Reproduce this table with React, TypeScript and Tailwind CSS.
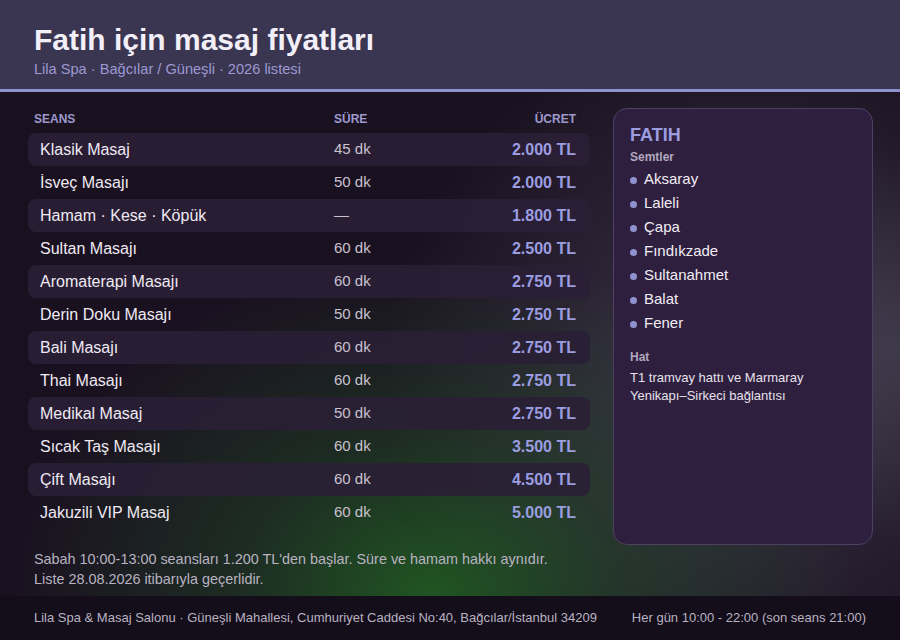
import React from "react";

const rows = [
  { name: "Klasik Masaj", dur: "45 dk", price: "2.000 TL" },
  { name: "İsveç Masajı", dur: "50 dk", price: "2.000 TL" },
  { name: "Hamam · Kese · Köpük", dur: "—", price: "1.800 TL" },
  { name: "Sultan Masajı", dur: "60 dk", price: "2.500 TL" },
  { name: "Aromaterapi Masajı", dur: "60 dk", price: "2.750 TL" },
  { name: "Derin Doku Masajı", dur: "50 dk", price: "2.750 TL" },
  { name: "Bali Masajı", dur: "60 dk", price: "2.750 TL" },
  { name: "Thai Masajı", dur: "60 dk", price: "2.750 TL" },
  { name: "Medikal Masaj", dur: "50 dk", price: "2.750 TL" },
  { name: "Sıcak Taş Masajı", dur: "60 dk", price: "3.500 TL" },
  { name: "Çift Masajı", dur: "60 dk", price: "4.500 TL" },
  { name: "Jakuzili VIP Masaj", dur: "60 dk", price: "5.000 TL" },
];

const districts = ["Aksaray", "Laleli", "Çapa", "Fındıkzade", "Sultanahmet", "Balat", "Fener"];

export default function App() {
  return (
    <div className="w-[900px] h-[640px] flex flex-col overflow-hidden font-['Liberation_Sans',Arial,sans-serif] bg-[#1a1120]">
      {/* Header */}
      <div className="h-[92px] shrink-0 bg-[#3a3551] border-b-[3px] border-[#8e93cf] px-[34px] pt-[22px]">
        <h1 className="text-[30px] leading-[36px] font-bold text-[#f3eff9]">Fatih için masaj fiyatları</h1>
        <div className="text-[14.6px] leading-[18px] text-[#9d99d1] mt-[2px]">Lila Spa · Bağcılar / Güneşli · 2026 listesi</div>
      </div>

      {/* Body */}
      <div className="flex-1 flex flex-col bg-[radial-gradient(ellipse_420px_340px_at_48%_100%,rgba(36,122,36,0.65),rgba(36,110,40,0.3)_45%,transparent),radial-gradient(ellipse_360px_360px_at_83%_55%,rgba(92,88,108,0.6),rgba(80,76,96,0.3)_50%,transparent),radial-gradient(ellipse_160px_200px_at_100%_50%,rgba(90,88,104,0.4),transparent)]">
        <div className="flex pl-[28px] pt-[16px]">
          {/* Table */}
          <div className="w-[562px]">
            <div className="grid grid-cols-[300px_1fr_auto] items-center h-[22px] pl-[6px] pr-[14px] text-[12px] font-bold text-[#9d99cd] mb-[3px]">
              <span>SEANS</span>
              <span>SÜRE</span>
              <span>ÜCRET</span>
            </div>
            {rows.map((r, i) => (
              <div
                key={r.name}
                className={`grid grid-cols-[294px_1fr_auto] items-center h-[33px] pl-[12px] pr-[14px] rounded-[8px] ${i % 2 === 0 ? "bg-[#2a1f35]/90" : ""}`}
              >
                <span className="text-[16px] text-[#efeaf3]">{r.name}</span>
                <span className="text-[15px] text-[#c9c2cf]">{r.dur}</span>
                <span className="text-[16px] font-bold text-[#9b9de0]">{r.price}</span>
              </div>
            ))}
          </div>

          {/* Side card */}
          <div className="ml-[23px] w-[260px] h-[437px] rounded-[14px] border border-[#4d4060] bg-[#2f1f3e] px-[16px] pt-[16px]">
            <div className="text-[18px] leading-[20px] font-bold text-[#9b9de0]">FATIH</div>
            <div className="text-[12px] leading-[14px] font-bold text-[#b0a8bd] mt-[5px]">Semtler</div>
            <ul className="mt-[3px]">
              {districts.map((d) => (
                <li key={d} className="flex items-center h-[24px] text-[15px] text-[#f1edf5]">
                  <span className="w-[7px] h-[7px] rounded-full bg-[#8e93cf] mr-[7px] mt-[2px]" />
                  {d}
                </li>
              ))}
            </ul>
            <div className="text-[12px] leading-[14px] font-bold text-[#b0a8bd] mt-[15px]">Hat</div>
            <div className="text-[13px] leading-[18px] text-[#e6e1ec] mt-[5px]">
              T1 tramvay hattı ve Marmaray
              <br />
              Yenikapı–Sirkeci bağlantısı
            </div>
          </div>
        </div>

        <div className="px-[34px] mt-[4px] text-[14.4px] leading-[20px] text-[#b9b2c1]">
          <div>Sabah 10:00-13:00 seansları 1.200 TL'den başlar. Süre ve hamam hakkı aynıdır.</div>
          <div>Liste 28.08.2026 itibarıyla geçerlidir.</div>
        </div>
      </div>

      {/* Footer */}
      <div className="h-[44px] shrink-0 bg-[#140e1b] flex items-center justify-between px-[34px] text-[13px] text-[#b9b2c1]">
        <span>Lila Spa &amp; Masaj Salonu · Güneşli Mahallesi, Cumhuriyet Caddesi No:40, Bağcılar/İstanbul 34209</span>
        <span>Her gün 10:00 - 22:00 (son seans 21:00)</span>
      </div>
    </div>
  );
}
